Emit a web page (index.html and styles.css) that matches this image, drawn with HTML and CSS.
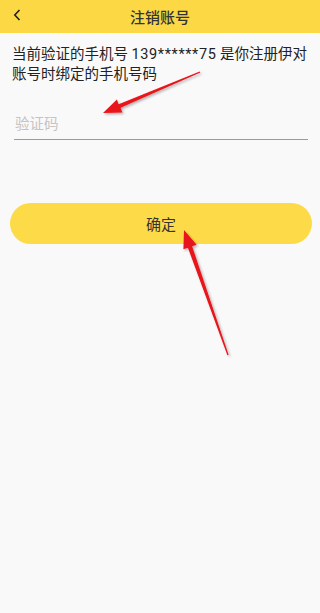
FILE: index.html
```html
<!DOCTYPE html>
<html lang="zh-CN">
<head>
    <meta charset="UTF-8">
    <meta name="viewport" content="width=device-width, initial-scale=1.0">
    <title>注销账号</title>
    <link rel="stylesheet" href="styles.css">
</head>
<body>
    <div class="page">
        <!-- 顶部标题栏 -->
        <div class="top-bar">
            <span class="back">
                <svg width="8" height="12" viewBox="0 0 8 12">
                    <path d="M6.5 1 L1.8 6 L6.5 11" fill="none" stroke="#222" stroke-width="1.6"/>
                </svg>
            </span>
            <span class="title">注销账号</span>
        </div>

        <p class="tip">当前验证的手机号 <span class="num">139******75</span> 是你注册伊对账号时绑定的手机号码</p>

        <div class="field">
            <input type="text" placeholder="验证码">
        </div>

        <button class="ok-btn">确定</button>

        <!-- 标注箭头 -->
        <svg class="marks" width="320" height="613" viewBox="0 0 320 613">
            <defs>
                <filter id="shade" x="-20%" y="-20%" width="140%" height="140%">
                    <feDropShadow dx="1.5" dy="1.5" stdDeviation="1" flood-color="#000" flood-opacity="0.3"/>
                </filter>
            </defs>
            <polygon filter="url(#shade)" fill="#e8141a"
                points="103,113 122.3,112.4 120.6,107.8 200.3,72.6 199.7,71.4 118.6,104.2 116.9,99.6"/>
            <polygon filter="url(#shade)" fill="#e8141a"
                points="184,230 196.6,244.7 192.1,246.3 228.6,354.8 227.4,355.2 187.9,247.7 183.4,249.3"/>
        </svg>
    </div>
</body>
</html>
```

FILE: styles.css
```css
* {
    box-sizing: border-box;
}

body {
    margin: 0;
    background-color: #faf9f9;
    font-family: Roboto, "Noto Sans CJK SC", sans-serif;
    color: #222;
}

.page {
    position: relative;
    width: 320px;
    height: 613px;
    overflow: hidden;
}

/* 标题栏 */
.top-bar {
    height: 33px;
    background-color: #fcd845;
    display: flex;
    align-items: center;
    justify-content: center;
    position: relative;
}

.back {
    position: absolute;
    left: 13px;
    top: 9px;
    display: flex;
}

.title {
    font-size: 15px;
    font-weight: 500;
    color: #333;
}

/* 提示文字 */
.tip {
    margin: 12px 6px 0 12px;
    font-size: 14.5px;
    line-height: 20px;
    color: #222;
}

.tip .num {
    letter-spacing: 0.6px;
}

/* 验证码输入 */
.field {
    margin: 25px 12px 0 14px;
    border-bottom: 1px solid #9a9a9a;
}

.field input {
    width: 100%;
    border: none;
    outline: none;
    background: transparent;
    padding: 0 1px;
    height: 29px;
    font-size: 14.5px;
    font-family: Roboto, "Noto Sans CJK SC", sans-serif;
    color: #222;
}

.field input::placeholder {
    color: #c4c4c4;
}

/* 确定按钮 */
.ok-btn {
    display: block;
    margin: 63px 8px 0 10px;
    width: 302px;
    height: 41px;
    border: none;
    border-radius: 21px;
    background-color: #fddb48;
    font-size: 15px;
    font-family: Roboto, "Noto Sans CJK SC", sans-serif;
    color: #333;
}

.marks {
    position: absolute;
    left: 0;
    top: 0;
    pointer-events: none;
}
```
